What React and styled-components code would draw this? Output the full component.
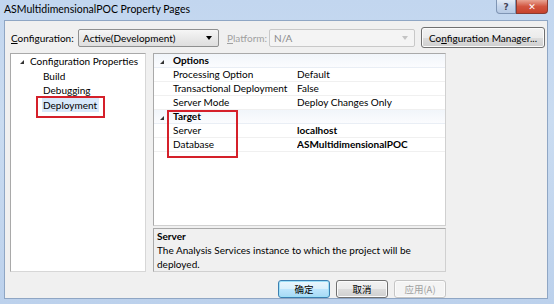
import React from "react"
import styled, { createGlobalStyle } from "styled-components"

const GlobalStyle = createGlobalStyle`
  html, body {
    margin: 0;
    padding: 0;
    background: #ffffff;
  }
  body {
    font-family: Lato, "Noto Sans", sans-serif;
    font-size: 10px;
    color: #000;
  }
`

const StyledWindow = styled.div`
  width: 554px;
  height: 304px;
  box-sizing: border-box;
  display: flex;
  flex-direction: column;
  background: linear-gradient(180deg, #c2d6ef 0%, #cadcf1 40%, #bcd1ec 100%);
  padding: 0 6px 5px 4px;
  overflow: hidden;
`

const StyledTitleBar = styled.div`
  height: 20px;
  display: flex;
  align-items: flex-start;
  justify-content: space-between;
  flex-shrink: 0;
`

const StyledTitle = styled.span`
  font-size: 10.5px;
  line-height: 16px;
  margin-top: 1px;
  color: #000;
`

const StyledCaptionButtons = styled.div`
  display: flex;
`

const StyledCaptionButton = styled.div`
  width: ${({ wide }) => (wide ? "32px" : "20px")};
  height: 14px;
  box-sizing: border-box;
  border: 1px solid ${({ danger }) => (danger ? "#8a3a30" : "#7f95b4")};
  border-top: none;
  border-radius: ${({ danger }) => (danger ? "0 0 4px 0" : "0 0 0 4px")};
  background: ${({ danger }) =>
    danger
      ? "linear-gradient(180deg, #e8a493 0%, #d2553f 50%, #c7422c 100%)"
      : "linear-gradient(180deg, #e4ecf6 0%, #c6d6ec 50%, #b7cae4 100%)"};
  color: ${({ danger }) => (danger ? "#fff" : "#445")};
  font-size: 9px;
  font-weight: 700;
  display: flex;
  align-items: center;
  justify-content: center;
  font-family: "DejaVu Sans", sans-serif;
`

const StyledBody = styled.div`
  flex: 1;
  background: #f0f0f0;
  border: 1px solid #8fa6c4;
  display: flex;
  flex-direction: column;
  padding: 6px 5px 0 5px;
  box-sizing: border-box;
`

const StyledTopRow = styled.div`
  display: flex;
  align-items: center;
  height: 21px;
`

const StyledLabel = styled.span`
  padding-left: 1px;
  width: ${({ w }) => w}px;
  flex-shrink: 0;
  color: ${({ disabled }) => (disabled ? "#a0a0a0" : "#000")};
`

const StyledCombo = styled.div`
  width: ${({ w }) => w}px;
  height: 18px;
  flex-shrink: 0;
  box-sizing: border-box;
  border: 1px solid ${({ disabled }) => (disabled ? "#c8c8c8" : "#8e8f8f")};
  border-radius: 2px;
  background: ${({ disabled }) =>
    disabled ? "#f4f4f4" : "linear-gradient(180deg, #f6f6f6 0%, #e9e9e9 50%, #dedede 100%)"};
  color: ${({ disabled }) => (disabled ? "#8a8a8a" : "#000")};
  display: flex;
  align-items: center;
  justify-content: space-between;
  padding: 0 4px 0 4px;
  margin-right: ${({ mr }) => mr}px;
`

const StyledArrow = styled.span`
  width: 0;
  height: 0;
  border-left: 3px solid transparent;
  border-right: 3px solid transparent;
  border-top: 4px solid ${({ disabled }) => (disabled ? "#c4c4c4" : "#000")};
  margin-right: 2px;
`

const StyledButton = styled.div`
  width: ${({ w }) => w}px;
  height: ${({ h }) => h || 22}px;
  flex-shrink: 0;
  box-sizing: border-box;
  border: 1px solid ${({ primary, disabled }) =>
    primary ? "#3c7fb1" : disabled ? "#c5c5c5" : "#707070"};
  border-radius: 3px;
  background: ${({ primary, disabled }) =>
    disabled
      ? "#f4f4f4"
      : primary
      ? "linear-gradient(180deg, #eaf6fd 0%, #d9f0fc 50%, #bee6fd 51%, #a7d9f5 100%)"
      : "linear-gradient(180deg, #f2f2f2 0%, #ebebeb 50%, #dddddd 51%, #cfcfcf 100%)"};
  box-shadow: ${({ primary }) => (primary ? "inset 0 0 0 1px #9ee0f8" : "inset 0 0 0 1px #fbfbfb")};
  color: ${({ disabled }) => (disabled ? "#a0a0a0" : "#000")};
  display: flex;
  align-items: center;
  justify-content: center;
  font-family: ${({ cjk }) =>
    cjk ? '"Noto Sans CJK SC", sans-serif' : 'Lato, "Noto Sans", sans-serif'};
  font-size: ${({ cjk }) => (cjk ? "9.5px" : "10px")};
`

const StyledMain = styled.div`
  display: flex;
  margin-top: 5px;
  gap: 7px;
  height: 219px;
`

const StyledTree = styled.div`
  position: relative;
  width: 136px;
  box-sizing: border-box;
  background: #fff;
  border: 1px solid #a9a9a9;
  border-right-color: #d7d7d7;
  border-bottom-color: #d7d7d7;
  padding-top: 0;
`

const StyledTreeItem = styled.div`
  display: flex;
  align-items: center;
  height: 14.5px;
  padding-left: ${({ level }) => (level ? 31 : 9)}px;
  line-height: 14px;
`

const StyledTreeText = styled.span`
  padding: 0 2px 0 1px;
  background: ${({ selected }) => (selected ? "#d9e9fa" : "transparent")};
`

const StyledRedBox = styled.span`
  position: absolute;
  left: ${({ l }) => l}px;
  top: ${({ t }) => t}px;
  width: ${({ w }) => w}px;
  height: ${({ h }) => h}px;
  box-sizing: border-box;
  border: 2px solid #d5202a;
  pointer-events: none;
`

const StyledExpander = styled.span`
  width: 0;
  height: 0;
  border-left: 4px solid transparent;
  border-bottom: 4px solid #333;
  margin-right: ${({ mr }) => mr || 0}px;
  margin-top: 2px;
`

const StyledRight = styled.div`
  width: 293px;
  display: flex;
  flex-direction: column;
  gap: 2px;
`

const StyledGrid = styled.div`
  position: relative;
  flex: 1;
  background: #fff;
  border: 1px solid #a9a9a9;
  border-right-color: #d0d0d0;
  border-bottom-color: #d0d0d0;
`

const StyledGridRow = styled.div`
  display: grid;
  grid-template-columns: 19px 124px 1fr;
  height: 13px;
  line-height: 12px;
  border-bottom: 1px solid ${({ category }) => (category ? "#e9eef5" : "#f0f0f0")};
  background: ${({ category }) =>
    category ? "linear-gradient(180deg, #f1f5fa 0%, #fbfcfe 100%)" : "#fff"};
  font-weight: ${({ category }) => (category ? 700 : 400)};
`

const StyledGutter = styled.span`
  display: flex;
  align-items: center;
  justify-content: center;
  padding-right: 3px;
`

const StyledValue = styled.span`
  font-weight: ${({ bold }) => (bold ? 700 : 400)};
  white-space: nowrap;
  overflow: hidden;
`

const StyledDescription = styled.div`
  height: 44px;
  box-sizing: border-box;
  border: 1px solid #a9a9a9;
  border-right-color: #d0d0d0;
  border-bottom-color: #d0d0d0;
  background: #f0f0f0;
  padding: 0 3px;
  line-height: 14px;
`

const StyledDescTitle = styled.div`
  font-weight: 700;
`

const StyledFooter = styled.div`
  display: flex;
  gap: 6px;
  padding-left: 268px;
  margin-top: 8px;
`

const rows = [
  { category: true, label: "Options" },
  { label: "Processing Option", value: "Default" },
  { label: "Transactional Deployment", value: "False" },
  { label: "Server Mode", value: "Deploy Changes Only" },
  { category: true, label: "Target" },
  { label: "Server", value: "localhost", bold: true },
  { label: "Database", value: "ASMultidimensionalPOC", bold: true },
]

const App = () => (
  <>
    <GlobalStyle />
    <StyledWindow>
      <StyledTitleBar>
        <StyledTitle>ASMultidimensionalPOC Property Pages</StyledTitle>
        <StyledCaptionButtons>
          <StyledCaptionButton>?</StyledCaptionButton>
          <StyledCaptionButton wide danger>
            ✕
          </StyledCaptionButton>
        </StyledCaptionButtons>
      </StyledTitleBar>
      <StyledBody>
        <StyledTopRow>
          <StyledLabel w={67}>
            <u>C</u>onfiguration:
          </StyledLabel>
          <StyledCombo w={141} mr={7}>
            <span>Active(Development)</span>
            <StyledArrow />
          </StyledCombo>
          <StyledLabel w={42} disabled>
            <u>P</u>latform:
          </StyledLabel>
          <StyledCombo w={146} mr={6} disabled>
            <span>N/A</span>
            <StyledArrow disabled />
          </StyledCombo>
          <StyledButton w={124} h={21}>
            Co<u>n</u>figuration Manager...
          </StyledButton>
        </StyledTopRow>
        <StyledMain>
          <StyledTree>
            <StyledTreeItem>
              <StyledExpander mr={6} />
              <span>Configuration Properties</span>
            </StyledTreeItem>
            <StyledTreeItem level={1}>
              <StyledTreeText>Build</StyledTreeText>
            </StyledTreeItem>
            <StyledTreeItem level={1}>
              <StyledTreeText>Debugging</StyledTreeText>
            </StyledTreeItem>
            <StyledTreeItem level={1}>
              <StyledTreeText selected>Deployment</StyledTreeText>
            </StyledTreeItem>
            <StyledRedBox l={25} t={42} w={69} h={22} />
          </StyledTree>
          <StyledRight>
            <StyledGrid>
              {rows.map(row => (
                <StyledGridRow key={row.label} category={row.category}>
                  <StyledGutter>{row.category && <StyledExpander />}</StyledGutter>
                  <span>{row.label}</span>
                  <StyledValue bold={row.bold}>{row.value}</StyledValue>
                </StyledGridRow>
              ))}
              <StyledRedBox l={13} t={56} w={71} h={48} />
            </StyledGrid>
            <StyledDescription>
              <StyledDescTitle>Server</StyledDescTitle>
              <div>The Analysis Services instance to which the project will be</div>
              <div>deployed.</div>
            </StyledDescription>
          </StyledRight>
        </StyledMain>
        <StyledFooter>
          <StyledButton w={52} h={18} primary cjk>
            确定
          </StyledButton>
          <StyledButton w={52} h={18} cjk>
            取消
          </StyledButton>
          <StyledButton w={52} h={18} disabled cjk>
            应用(A)
          </StyledButton>
        </StyledFooter>
      </StyledBody>
    </StyledWindow>
  </>
)

export default App
